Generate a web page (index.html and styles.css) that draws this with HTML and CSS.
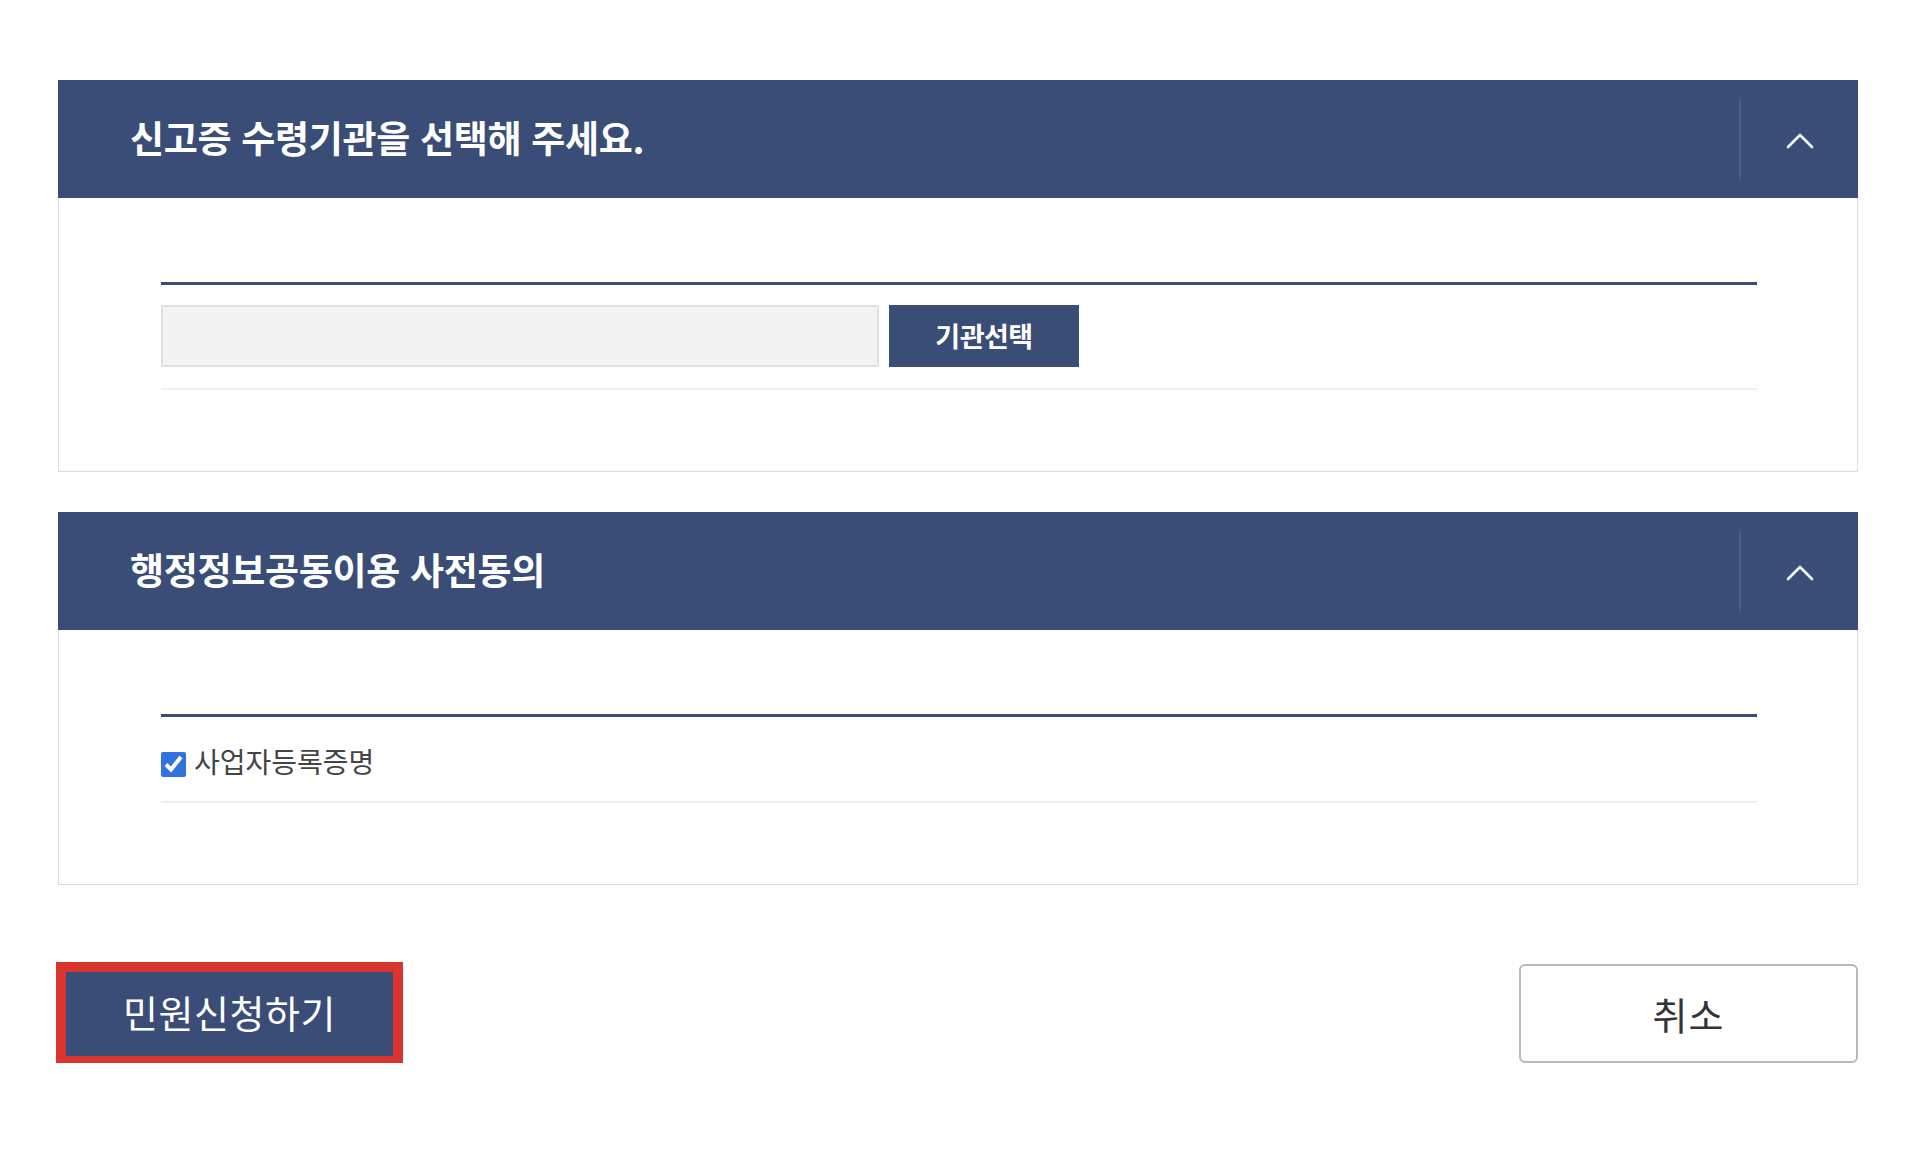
FILE: index.html
```html
<!DOCTYPE html>
<html lang="ko">
<head>
<meta charset="utf-8">
<link rel="stylesheet" href="styles.css">
</head>
<body>
<div class="page">
  <section class="panel">
    <div class="panel-head">
      <h2 class="panel-title">신고증 수령기관을 선택해 주세요.</h2>
      <button class="toggle" type="button" aria-label="접기">
        <svg width="30" height="18" viewBox="0 0 30 18"><polyline points="3,15 15,3 27,15" fill="none" stroke="#ffffff" stroke-width="2.6" stroke-linecap="round" stroke-linejoin="round"/></svg>
      </button>
    </div>
    <div class="panel-body">
      <div class="table">
        <div class="row row-org">
          <input class="org-input" type="text" readonly>
          <button class="org-btn" type="button">기관선택</button>
        </div>
      </div>
    </div>
  </section>

  <section class="panel">
    <div class="panel-head">
      <h2 class="panel-title">행정정보공동이용 사전동의</h2>
      <button class="toggle" type="button" aria-label="접기">
        <svg width="30" height="18" viewBox="0 0 30 18"><polyline points="3,15 15,3 27,15" fill="none" stroke="#ffffff" stroke-width="2.6" stroke-linecap="round" stroke-linejoin="round"/></svg>
      </button>
    </div>
    <div class="panel-body">
      <div class="table">
        <div class="row row-check">
          <label class="check"><input type="checkbox" checked><span>사업자등록증명</span></label>
        </div>
      </div>
    </div>
  </section>

  <div class="actions">
    <button class="btn-apply" type="button">민원신청하기</button>
    <button class="btn-cancel" type="button">취소</button>
  </div>
</div>
</body>
</html>
```

FILE: styles.css
```css
* { box-sizing: border-box; }
html, body { margin: 0; padding: 0; background: #ffffff; }
body {
  font-family: "Noto Sans CJK KR", "Noto Sans", sans-serif;
  color: #333333;
}
.page {
  width: 1800px;
  margin: 80px 0 0 58px;
}
.panel { margin-bottom: 40px; }
.panel-head {
  height: 118px;
  background: #3a4d76;
  display: flex;
  align-items: center;
  justify-content: space-between;
  padding-left: 72px;
}
.panel-title {
  margin: 0 0 3px 0;
  color: #ffffff;
  font-size: 37px;
  font-weight: 700;
  letter-spacing: -0.3px;
  line-height: 1;
}
.toggle {
  width: 119px;
  height: 80px;
  border: 0;
  border-left: 2px solid #4b5e86;
  background: transparent;
  display: flex;
  align-items: center;
  justify-content: center;
  padding: 4px 0 0 0;
  cursor: pointer;
}
.panel-body {
  border: 1px solid #dcdcdc;
  border-top: 0;
  padding: 84px 100px 81px 102px;
}
.table { border-top: 3px solid #3a4d76; }
.row {
  border-bottom: 2px solid #efefef;
  display: flex;
  align-items: center;
}
.row-org { padding: 20px 0 21px 0; gap: 10px; }
.org-input {
  width: 718px;
  height: 62px;
  background: #f3f3f3;
  border: 2px solid #e2e2e2;
  margin: 0;
}
.org-btn {
  width: 190px;
  height: 62px;
  background: #3a4d76;
  border: 0;
  color: #ffffff;
  font-family: "Noto Sans CJK KR", sans-serif;
  font-size: 27px;
  font-weight: 700;
  letter-spacing: -0.5px;
  padding: 0 0 2px 0;
}
.row-check { height: 86px; padding-top: 8px; }
.check {
  display: flex;
  align-items: center;
  gap: 8px;
  font-size: 28px;
  color: #444444;
  letter-spacing: 0;
}
.check span { margin-top: -4px; }
.check input {
  width: 25px;
  height: 25px;
  margin: 2px 0 0 0;
  accent-color: #2f72e0;
}
.actions {
  display: flex;
  justify-content: space-between;
  align-items: center;
  margin-top: 79px;
}
.btn-apply {
  margin-left: 8px;
  width: 327px;
  height: 84px;
  background: #3a4d76;
  border: 0;
  outline: 10px solid #d9352e;
  color: #ffffff;
  font-family: "Noto Sans CJK KR", sans-serif;
  font-size: 38px;
  font-weight: 400;
  letter-spacing: 0.5px;
  padding: 0 0 4px 0;
}
.btn-cancel {
  width: 339px;
  height: 99px;
  background: #ffffff;
  border: 2px solid #b9b9b9;
  border-radius: 6px;
  color: #333333;
  font-family: "Noto Sans CJK KR", sans-serif;
  font-size: 38px;
  letter-spacing: 1px;
  padding: 0;
}
```
